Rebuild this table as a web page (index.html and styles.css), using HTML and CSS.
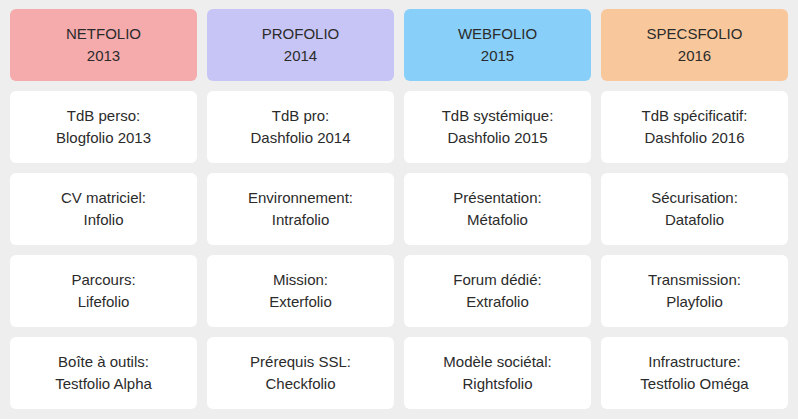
FILE: index.html
```html
<!DOCTYPE html>
<html lang="fr">
<head>
<meta charset="utf-8">
<link rel="stylesheet" href="styles.css">
</head>
<body>
<main class="board">
  <div class="card head pink">NETFOLIO<br>2013</div>
  <div class="card head lavender">PROFOLIO<br>2014</div>
  <div class="card head sky">WEBFOLIO<br>2015</div>
  <div class="card head peach">SPECSFOLIO<br>2016</div>

  <div class="card">TdB perso:<br>Blogfolio 2013</div>
  <div class="card">TdB pro:<br>Dashfolio 2014</div>
  <div class="card">TdB systémique:<br>Dashfolio 2015</div>
  <div class="card">TdB spécificatif:<br>Dashfolio 2016</div>

  <div class="card">CV matriciel:<br>Infolio</div>
  <div class="card">Environnement:<br>Intrafolio</div>
  <div class="card">Présentation:<br>Métafolio</div>
  <div class="card">Sécurisation:<br>Datafolio</div>

  <div class="card">Parcours:<br>Lifefolio</div>
  <div class="card">Mission:<br>Exterfolio</div>
  <div class="card">Forum dédié:<br>Extrafolio</div>
  <div class="card">Transmission:<br>Playfolio</div>

  <div class="card">Boîte à outils:<br>Testfolio Alpha</div>
  <div class="card">Prérequis SSL:<br>Checkfolio</div>
  <div class="card">Modèle sociétal:<br>Rightsfolio</div>
  <div class="card">Infrastructure:<br>Testfolio Oméga</div>
</main>
</body>
</html>
```
FILE: styles.css
```css
html, body {
  margin: 0;
  padding: 0;
  background: #eeeeee;
}
body {
  font-family: "Liberation Sans", Arial, Helvetica, sans-serif;
  font-size: 15px;
  color: #2b2b2b;
}
.board {
  display: grid;
  grid-template-columns: repeat(4, 187px);
  grid-auto-rows: 72px;
  gap: 10px;
  padding: 9px 10px 10px 10px;
}
.card {
  background: #ffffff;
  border-radius: 6px;
  display: flex;
  align-items: center;
  justify-content: center;
  text-align: center;
  line-height: 22px;
}
.pink { background: #f5aaab; }
.lavender { background: #c7c5f5; }
.sky { background: #88cff9; }
.peach { background: #f8c79c; }
```
